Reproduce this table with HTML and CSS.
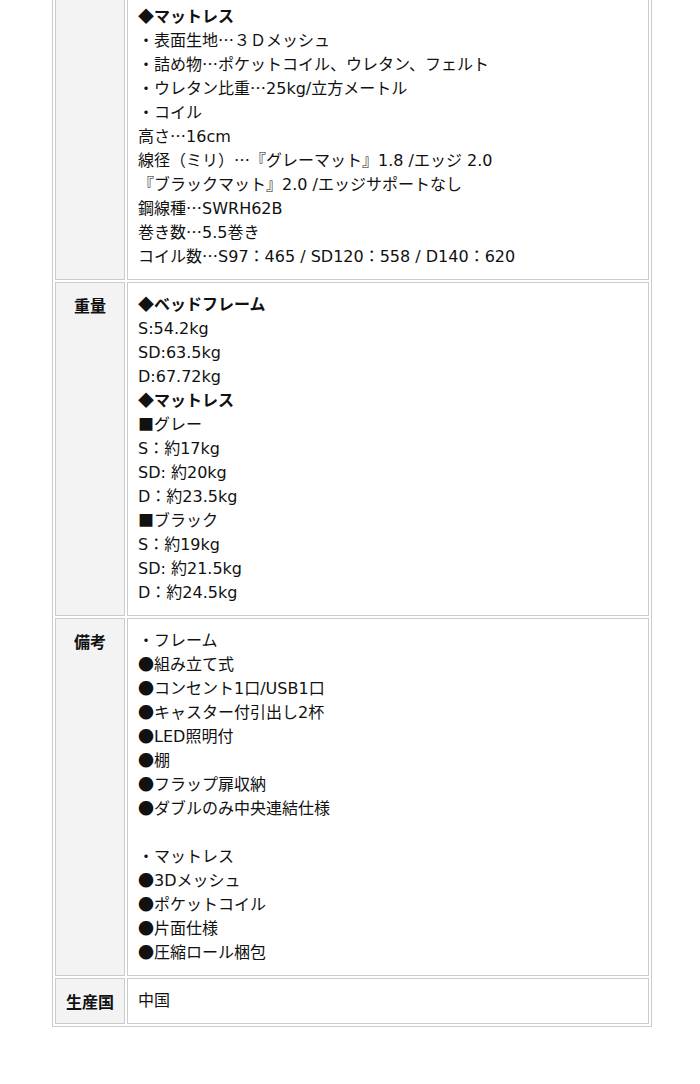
FILE: index.html
```html
<!DOCTYPE html>
<html lang="ja">
<head>
<meta charset="utf-8">
<title>仕様</title>
<link rel="stylesheet" href="styles.css">
</head>
<body>
<div class="wrap">
<table class="spec">
<tbody>
<tr>
<th></th>
<td>
<b><span class="sym">◆</span>マットレス</b><br>
・表面生地<span class="jp">…</span>３Ｄメッシュ<br>
・詰め物<span class="jp">…</span>ポケットコイル、ウレタン、フェルト<br>
・ウレタン比重<span class="jp">…</span>25kg/立方メートル<br>
・コイル<br>
高さ<span class="jp">…</span>16cm<br>
線径（ミリ）<span class="jp">…</span>『グレーマット』1.8 /エッジ 2.0<br>
『ブラックマット』2.0 /エッジサポートなし<br>
鋼線種<span class="jp">…</span>SWRH62B<br>
巻き数<span class="jp">…</span>5.5巻き<br>
コイル数<span class="jp">…</span>S97：465 / SD120：558 / D140：620
</td>
</tr>
<tr>
<th>重量</th>
<td>
<b><span class="sym">◆</span>ベッドフレーム</b><br>
S:54.2kg<br>
SD:63.5kg<br>
D:67.72kg<br>
<b><span class="sym">◆</span>マットレス</b><br>
<span class="sym">■</span>グレー<br>
S：約17kg<br>
SD: 約20kg<br>
D：約23.5kg<br>
<span class="sym">■</span>ブラック<br>
S：約19kg<br>
SD: 約21.5kg<br>
D：約24.5kg
</td>
</tr>
<tr>
<th>備考</th>
<td>
・フレーム<br>
<span class="sym">●</span>組み立て式<br>
<span class="sym">●</span>コンセント1口/USB1口<br>
<span class="sym">●</span>キャスター付引出し2杯<br>
<span class="sym">●</span>LED照明付<br>
<span class="sym">●</span>棚<br>
<span class="sym">●</span>フラップ扉収納<br>
<span class="sym">●</span>ダブルのみ中央連結仕様<br>
<br>
・マットレス<br>
<span class="sym">●</span>3Dメッシュ<br>
<span class="sym">●</span>ポケットコイル<br>
<span class="sym">●</span>片面仕様<br>
<span class="sym">●</span>圧縮ロール梱包
</td>
</tr>
<tr>
<th>生産国</th>
<td>中国</td>
</tr>
</tbody>
</table>
</div>
</body>
</html>
```

FILE: styles.css
```css
html, body {
  margin: 0;
  padding: 0;
  background: #ffffff;
}

.wrap {
  padding-left: 52px;
}

.spec {
  width: 600px;
  margin-top: -9px;
  border: 1px solid #cccccc;
  border-collapse: separate;
  border-spacing: 2px;
  font-family: "DejaVu Sans", "Noto Sans CJK JP", sans-serif;
  font-size: 16px;
  line-height: 24px;
  color: #111111;
}

.spec th,
.spec td {
  border: 1px solid #cccccc;
  padding: 10px;
  vertical-align: top;
}

.spec th {
  width: 48px;
  background: #f3f3f3;
  font-weight: bold;
  text-align: center;
  white-space: nowrap;
  font-family: "Noto Sans CJK JP", sans-serif;
}

.spec td {
  text-align: left;
  background: #ffffff;
}

.spec b {
  font-weight: bold;
}

.jp,
.sym {
  font-family: "Noto Sans CJK JP", sans-serif;
  line-height: 0;
}
```
